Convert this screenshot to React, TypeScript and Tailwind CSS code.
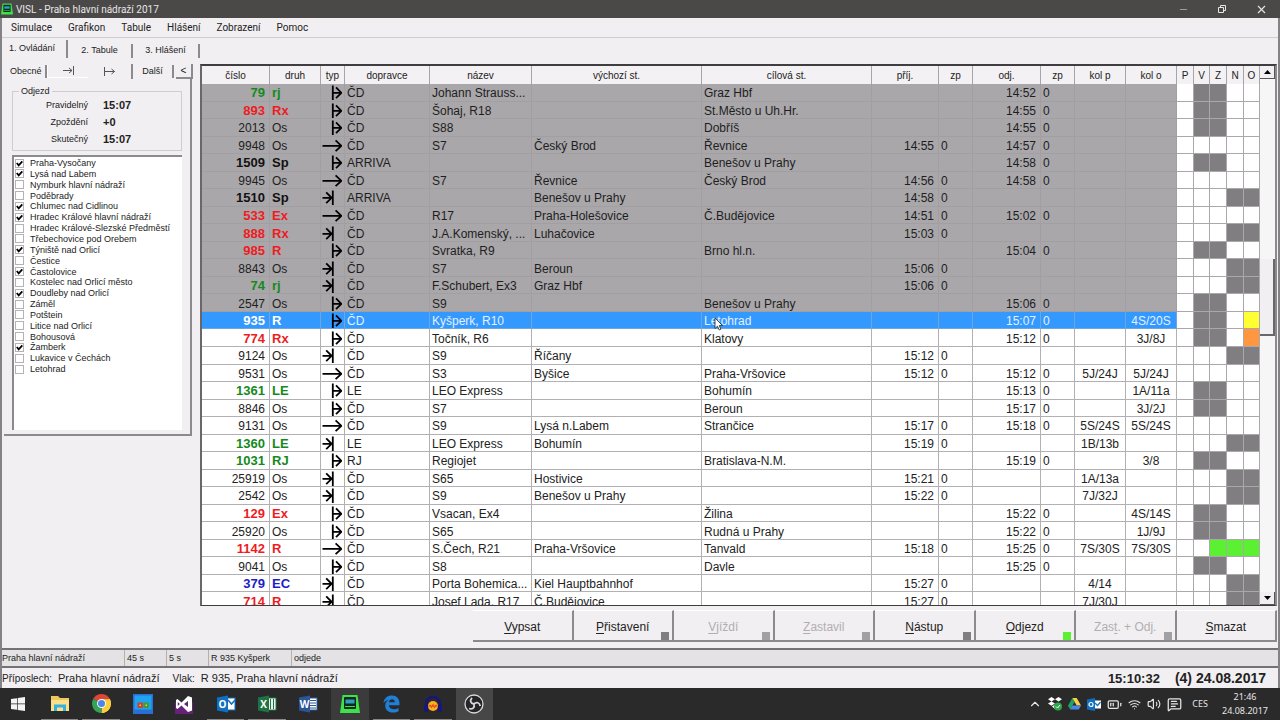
import type { ReactNode } from 'react';
import clsx from 'clsx';
import { BatteryMedium, ChevronUp, MessageSquareText, Minus, Volume2, Wifi, X } from 'lucide-react';

type Kind = 'dep' | 'arr' | 'thru';
type Tone = 'green' | 'red' | 'bold' | 'blue' | 'plain';
type Lamp = '' | 'gray' | 'yellow' | 'orange' | 'lime';

interface Train {
  num: string;
  type: string;
  tone: Tone;
  kind: Kind;
  carrier: string;
  name: string;
  from: string;
  to: string;
  arr: string;
  dep: string;
  trackIn: string;
  trackOut: string;
  lamps?: Lamp[];
}

const train = (
  num: string,
  type: string,
  tone: Tone,
  kind: Kind,
  carrier: string,
  name: string,
  from: string,
  to: string,
  arr: string,
  dep: string,
  trackIn = '',
  trackOut = '',
  lamps?: Lamp[],
): Train => ({ num, type, tone, kind, carrier, name, from, to, arr, dep, trackIn, trackOut, lamps });

const SELECTED = '935';
const PASSED = 13;

const trains: Train[] = [
  train('79', 'rj', 'green', 'dep', 'ČD', 'Johann Strauss...', '', 'Graz Hbf', '', '14:52'),
  train('893', 'Rx', 'red', 'dep', 'ČD', 'Šohaj, R18', '', 'St.Město u Uh.Hr.', '', '14:55'),
  train('2013', 'Os', 'plain', 'dep', 'ČD', 'S88', '', 'Dobříš', '', '14:55'),
  train('9948', 'Os', 'plain', 'thru', 'ČD', 'S7', 'Český Brod', 'Řevnice', '14:55', '14:57'),
  train('1509', 'Sp', 'bold', 'dep', 'ARRIVA', '', '', 'Benešov u Prahy', '', '14:58'),
  train('9945', 'Os', 'plain', 'thru', 'ČD', 'S7', 'Řevnice', 'Český Brod', '14:56', '14:58'),
  train('1510', 'Sp', 'bold', 'arr', 'ARRIVA', '', 'Benešov u Prahy', '', '14:58', ''),
  train('533', 'Ex', 'red', 'thru', 'ČD', 'R17', 'Praha-Holešovice', 'Č.Budějovice', '14:51', '15:02'),
  train('888', 'Rx', 'red', 'arr', 'ČD', 'J.A.Komenský, ...', 'Luhačovice', '', '15:03', ''),
  train('985', 'R', 'red', 'dep', 'ČD', 'Svratka, R9', '', 'Brno hl.n.', '', '15:04'),
  train('8843', 'Os', 'plain', 'arr', 'ČD', 'S7', 'Beroun', '', '15:06', ''),
  train('74', 'rj', 'green', 'arr', 'ČD', 'F.Schubert, Ex3', 'Graz Hbf', '', '15:06', ''),
  train('2547', 'Os', 'plain', 'dep', 'ČD', 'S9', '', 'Benešov u Prahy', '', '15:06'),
  train('935', 'R', 'bold', 'dep', 'ČD', 'Kyšperk, R10', '', 'Letohrad', '', '15:07', '', '4S/20S', ['', 'gray', 'gray', '', 'yellow']),
  train('774', 'Rx', 'red', 'dep', 'ČD', 'Točník, R6', '', 'Klatovy', '', '15:12', '', '3J/8J', ['', 'gray', 'gray', '', 'orange']),
  train('9124', 'Os', 'plain', 'arr', 'ČD', 'S9', 'Říčany', '', '15:12', ''),
  train('9531', 'Os', 'plain', 'thru', 'ČD', 'S3', 'Byšice', 'Praha-Vršovice', '15:12', '15:12', '5J/24J', '5J/24J'),
  train('1361', 'LE', 'green', 'dep', 'LE', 'LEO Express', '', 'Bohumín', '', '15:13', '', '1A/11a'),
  train('8846', 'Os', 'plain', 'dep', 'ČD', 'S7', '', 'Beroun', '', '15:17', '', '3J/2J'),
  train('9131', 'Os', 'plain', 'thru', 'ČD', 'S9', 'Lysá n.Labem', 'Strančice', '15:17', '15:18', '5S/24S', '5S/24S'),
  train('1360', 'LE', 'green', 'arr', 'LE', 'LEO Express', 'Bohumín', '', '15:19', '', '1B/13b'),
  train('1031', 'RJ', 'green', 'dep', 'RJ', 'Regiojet', '', 'Bratislava-N.M.', '', '15:19', '', '3/8'),
  train('25919', 'Os', 'plain', 'arr', 'ČD', 'S65', 'Hostivice', '', '15:21', '', '1A/13a'),
  train('2542', 'Os', 'plain', 'arr', 'ČD', 'S9', 'Benešov u Prahy', '', '15:22', '', '7J/32J'),
  train('129', 'Ex', 'red', 'dep', 'ČD', 'Vsacan, Ex4', '', 'Žilina', '', '15:22', '', '4S/14S'),
  train('25920', 'Os', 'plain', 'dep', 'ČD', 'S65', '', 'Rudná u Prahy', '', '15:22', '', '1J/9J'),
  train('1142', 'R', 'red', 'thru', 'ČD', 'S.Čech, R21', 'Praha-Vršovice', 'Tanvald', '15:18', '15:25', '7S/30S', '7S/30S', ['', '', 'lime', 'lime', 'lime']),
  train('9041', 'Os', 'plain', 'dep', 'ČD', 'S8', '', 'Davle', '', '15:25'),
  train('379', 'EC', 'blue', 'arr', 'ČD', 'Porta Bohemica...', 'Kiel Hauptbahnhof', '', '15:27', '', '4/14'),
  train('714', 'R', 'red', 'arr', 'ČD', 'Josef Lada, R17', 'Č.Budějovice', '', '15:27', '', '7J/30J'),
];

const defaultLamps: Record<Kind, Lamp[]> = {
  dep: ['', 'gray', 'gray', '', ''],
  arr: ['', '', '', 'gray', 'gray'],
  thru: ['', '', '', '', ''],
};

const lampColor: Record<Lamp, string> = {
  '': 'bg-white',
  gray: 'bg-[#807e80]',
  yellow: 'bg-[#ffff33]',
  orange: 'bg-[#ff9640]',
  lime: 'bg-[#5cf032]',
};

const toneColor: Record<Tone, string> = {
  green: 'font-bold text-[13px] text-[#158a1c]',
  red: 'font-bold text-[13px] text-[#ee1c22]',
  bold: 'font-bold text-[13px] text-[#111111]',
  blue: 'font-bold text-[13px] text-[#1c1cc8]',
  plain: '',
};

const columns = [
  { label: 'číslo', width: 'w-[68px]' },
  { label: 'druh', width: 'w-[51px]' },
  { label: 'typ', width: 'w-[24px]' },
  { label: 'dopravce', width: 'w-[85px]' },
  { label: 'název', width: 'w-[102px]' },
  { label: 'výchozí st.', width: 'w-[170px]' },
  { label: 'cílová st.', width: 'w-[170px]' },
  { label: 'příj.', width: 'w-[67px]' },
  { label: 'zp', width: 'w-[34px]' },
  { label: 'odj.', width: 'w-[68px]' },
  { label: 'zp', width: 'w-[34px]' },
  { label: 'kol p', width: 'w-[51px]' },
  { label: 'kol o', width: 'w-[51px]' },
  { label: 'P', width: 'w-[17px]' },
  { label: 'V', width: 'w-[16px]' },
  { label: 'Z', width: 'w-[17px]' },
  { label: 'N', width: 'w-[17px]' },
  { label: 'O', width: 'w-[16px]' },
];

const stations: [string, boolean][] = [
  ['Praha-Vysočany', true],
  ['Lysá nad Labem', true],
  ['Nymburk hlavní nádraží', false],
  ['Poděbrady', false],
  ['Chlumec nad Cidlinou', true],
  ['Hradec Králové hlavní nádraží', true],
  ['Hradec Králové-Slezské Předměstí', false],
  ['Třebechovice pod Orebem', false],
  ['Týniště nad Orlicí', true],
  ['Čestice', false],
  ['Častolovice', true],
  ['Kostelec nad Orlicí město', false],
  ['Doudleby nad Orlicí', true],
  ['Záměl', false],
  ['Potštein', false],
  ['Litice nad Orlicí', false],
  ['Bohousová', false],
  ['Žamberk', true],
  ['Lukavice v Čechách', false],
  ['Letohrad', false],
];

const KindIcon = ({ kind }: { kind: Kind }) => (
  <svg className="block h-4 w-5" viewBox="0 0 20 16" fill="none" stroke="#000" strokeWidth={1.8}>
    {kind === 'dep' && <path d="M10.8 1.500V16M10.8 8.800H19M14 3.400L19.400 8.800L14 14.200" />}
    {kind === 'thru' && <path d="M.5 8.800H19M13.600 3.400L19.400 8.800L13.600 14.200" />}
    {kind === 'arr' && <path d="M10.800 1.500V16M.5 8.800H9.600M4.200 3.400L9.600 8.800L4.200 14.200" />}
  </svg>
);

const AppIcon = ({ className }: { className: string }) => (
  <svg className={className} viewBox="0 0 20 18">
    <path d="M2.5 0H17.5L20 18H0Z" fill="#3fe04a" />
    <rect x="4" y="2" width="12" height="12" rx="1" fill="#0c2b1c" />
    <rect x="5.5" y="4.5" width="9" height="4" fill="#2e9fc0" />
    <path d="M5 11.5h10" stroke="#3fe04a" strokeWidth="1" />
  </svg>
);

const TitleBar = () => (
  <header className="flex h-[18px] shrink-0 items-center bg-[#4b4848] pr-3 text-[#e8e6e6]">
    <AppIcon className="ml-px h-[12px] w-[12px]" />
    <h1 className="ml-[3px] flex-1 font-[Roboto,sans-serif] text-[10px]">VISL - Praha hlavní nádraží 2017</h1>
    <button aria-label="Minimalizovat" className="mr-7 text-[#a5a3a3]">
      <Minus size={11} />
    </button>
    <button aria-label="Obnovit" className="mr-7">
      <svg className="h-[10px] w-[10px]" viewBox="0 0 10 10" fill="none" stroke="currentColor">
        <path d="M1.5 3.5h5v5h-5zM3.5 3.5v-2h5v5h-2" />
      </svg>
    </button>
    <button aria-label="Zavřít">
      <X size={13} strokeWidth={2} />
    </button>
  </header>
);

const MenuBar = () => (
  <nav className="flex h-5 shrink-0 items-center gap-4 border-b border-[#cfcdd0] pl-[9px] font-[Roboto,sans-serif] text-[10px]">
    {['Simulace', 'Grafikon', 'Tabule', 'Hlášení', 'Zobrazení', 'Pomoc'].map((item) => (
      <button key={item}>{item}</button>
    ))}
  </nav>
);

const MainTabs = () => (
  <div role="tablist" className="flex h-[22px] shrink-0 items-end pb-[2px] text-[9px]">
    <button role="tab" aria-selected className="h-[18px] w-[66px] border-r-2 border-[#8d8a8e] pr-1">
      1. Ovládání
    </button>
    <button role="tab" className="h-[14px] w-[65px] border-r-2 border-[#8d8a8e]">
      2. Tabule
    </button>
    <button role="tab" className="h-[14px] w-[67px] border-r-2 border-[#8d8a8e]">
      3. Hlášení
    </button>
  </div>
);

const SubTabs = () => (
  <div role="tablist" className="flex h-4 items-center text-[9px]">
    <button role="tab" className="h-[13px] w-[45px] border-r-2 border-[#8d8a8e] pl-2 text-left">
      Obecné
    </button>
    <button role="tab" aria-label="Příjezd" className="flex h-[13px] w-[41px] items-center justify-center border-b border-l border-white">
      <svg className="h-[9px] w-[11px]" viewBox="0 0 11 9" fill="none" stroke="#555">
        <path d="M10.5 0V9M0 4.5H9M6 2L9 4.5L6 7" />
      </svg>
    </button>
    <button role="tab" aria-selected aria-label="Odjezd" className="flex h-[15px] w-[45px] items-center justify-center border-r-2 border-[#8d8a8e]">
      <svg className="h-[9px] w-[11px]" viewBox="0 0 11 9" fill="none" stroke="#555">
        <path d="M.5 0V9M1 4.5H10.5M7.5 2L10.5 4.5L7.5 7" />
      </svg>
    </button>
    <button role="tab" className="h-[13px] w-[41px] border-r-2 border-[#8d8a8e]">
      Další
    </button>
    <button aria-label="Zpět" className="ml-[2px] flex h-[15px] w-[17px] items-center justify-center border-r-2 border-b-2 border-[#8d8a8e] pt-px text-[10px]">
      &lt;
    </button>
  </div>
);

const DepartureInfo = () => {
  const rows = [
    ['Pravidelný', '15:07'],
    ['Zpoždění', '+0'],
    ['Skutečný', '15:07'],
  ];

  return (
    <fieldset className="mx-2 mt-[6px] h-[66px] border border-[#cfcdd0] text-[9px]">
      <legend className="ml-[6px] px-[2px] leading-3">Odjezd</legend>
      <dl className="grid grid-cols-[75px_1fr] gap-x-[15px] leading-[17px]">
        {rows.map(([label, value]) => (
          <div key={label} className="contents">
            <dt className="text-right">{label}</dt>
            <dd className="text-[11px] font-bold">{value}</dd>
          </div>
        ))}
      </dl>
    </fieldset>
  );
};

const StationList = () => (
  <div className="mx-2 mt-1 flex-1 border-t-2 border-l-2 border-[#8d8a8e] bg-white pt-px">
    <ul className="grid h-[217px] auto-rows-fr text-[9px] leading-[10px]">
      {stations.map(([name, checked]) => (
        <li key={name}>
          <label className="flex items-center gap-[6px] pl-px whitespace-nowrap">
            <span className="relative flex">
              <input
                type="checkbox"
                defaultChecked={checked}
                className="peer h-[9px] w-[9px] appearance-none border border-[#b5b2b6] bg-white"
              />
              <svg
                className="pointer-events-none absolute inset-0 hidden h-[9px] w-[9px] peer-checked:block"
                viewBox="0 0 9 9"
                fill="none"
                stroke="#000"
                strokeWidth={1.8}
              >
                <path d="M1.8 4L3.7 6.3L7.3 2.4" />
              </svg>
            </span>
            {name}
          </label>
        </li>
      ))}
    </ul>
  </div>
);

const Cell = ({ className, children }: { className?: string; children?: ReactNode }) => (
  <td className={clsx('overflow-hidden border-r border-b px-[2px] pt-[2px] pb-0 whitespace-nowrap', className)}>
    {children}
  </td>
);

const TrainRow = ({ item, passed }: { item: Train; passed: boolean }) => {
  const selected = item.num === SELECTED;
  const lamps = item.lamps ?? defaultLamps[item.kind];
  const line = selected ? 'border-[#6fa6dc]' : passed ? 'border-[#a29fa3]' : 'border-[#b3b0b4]';
  const tone = selected ? 'font-bold text-[13px] text-white' : toneColor[item.tone];

  return (
    <tr
      className={clsx(
        selected ? 'bg-[#3399ff] text-[#e4f0ff]' : passed ? 'bg-[#a9a7aa] text-[#1e1e1e]' : 'bg-white text-[#222222]',
      )}
    >
      <Cell className={clsx('pr-1 text-right', line, tone)}>{item.num}</Cell>
      <Cell className={clsx(line, tone)}>{item.type}</Cell>
      <td className={clsx('border-r border-b p-0 pl-px', line)}>
        <KindIcon kind={item.kind} />
      </td>
      <Cell className={line}>{item.carrier}</Cell>
      <Cell className={line}>{item.name}</Cell>
      <Cell className={line}>{item.from}</Cell>
      <td className={clsx('relative border-r border-b px-[2px] pt-[2px] pb-0 whitespace-nowrap', line)}>
        {item.to}
        {selected && (
          <svg className="absolute top-[5px] left-3 h-[14px] w-[10px]" viewBox="0 0 10 14">
            <path d="M1 1V11.5L3.5 9.2L5.2 13L6.9 12.2L5.3 8.6H8.6Z" fill="#fff" stroke="#222" strokeWidth=".8" />
          </svg>
        )}
      </td>
      <Cell className={clsx('pr-1 text-right', line)}>{item.arr}</Cell>
      <Cell className={line}>{item.arr && '0'}</Cell>
      <Cell className={clsx('pr-1 text-right', line)}>{item.dep}</Cell>
      <Cell className={line}>{item.dep && '0'}</Cell>
      <Cell className={clsx('text-center', line)}>{item.trackIn}</Cell>
      <Cell className={clsx('text-center', line)}>{item.trackOut}</Cell>
      {lamps.map((lamp, i) => (
        <td key={i} className={clsx('border-r border-b border-[#aaa8ab] p-0', lampColor[lamp])} />
      ))}
    </tr>
  );
};

const TrainTable = () => (
  <div className="flex min-h-0 flex-1 border-2 border-b border-[#3f3d40] border-r-[#8d8a8e] border-l-[#6a676b]">
    <div className="min-w-0 flex-1 overflow-hidden bg-white">
      <table className="h-[544px] w-full table-fixed border-separate border-spacing-0 text-[12px] leading-[14px]">
        <colgroup>
          {columns.map((col, i) => (
            <col key={i} className={col.width} />
          ))}
        </colgroup>
        <thead>
          <tr className="h-[18px] bg-[#f3f1f3] text-[10px]">
            {columns.map((col, i) => (
              <th key={i} className="border-r border-[#a8a5a9] p-0 pt-[2px] font-normal whitespace-nowrap">
                {col.label}
              </th>
            ))}
          </tr>
        </thead>
        <tbody>
          {trains.map((item, i) => (
            <TrainRow key={item.num} item={item} passed={i < PASSED} />
          ))}
        </tbody>
      </table>
    </div>
    <div className="flex w-[15px] shrink-0 flex-col bg-[#f7f6f7]">
      <button aria-label="Nahoru" className="flex h-[13px] items-center justify-center border-r border-b border-[#555] bg-[#f1eff1]">
        <svg className="h-1 w-[7px]" viewBox="0 0 7 4">
          <path d="M0 4L3.5 0L7 4Z" />
        </svg>
      </button>
      <div className="flex flex-1 flex-col">
        <div className="flex-[181]" />
        <div className="flex-[75] border-r-2 border-b-2 border-[#6a676b] bg-[#f1eff1]" />
        <div className="flex-[257]" />
      </div>
      <button aria-label="Dolů" className="flex h-[13px] items-center justify-center border-r border-b border-[#555] bg-[#f1eff1]">
        <svg className="h-1 w-[7px]" viewBox="0 0 7 4">
          <path d="M0 0L3.5 4L7 0Z" />
        </svg>
      </button>
    </div>
  </div>
);

interface ActionProps {
  before?: string;
  hot: string;
  after: string;
  lamp?: string;
  disabled?: boolean;
}

const ActionButton = ({ before, hot, after, lamp, disabled }: ActionProps) => (
  <button
    disabled={disabled}
    className="relative border-t border-r-2 border-b-2 border-t-white border-r-[#8d8a8e] border-b-[#8d8a8e] pt-[2px] text-[12px] disabled:text-[#b1aeb2]"
  >
    {before}
    <span className="underline underline-offset-2">{hot}</span>
    {after}
    {lamp && <span className={clsx('absolute right-[3px] bottom-0 h-2 w-2', lamp)} />}
  </button>
);

const ActionBar = () => (
  <div className="mt-1 mb-[6px] ml-auto grid h-[32px] w-[804px] shrink-0 grid-cols-8">
    <ActionButton hot="V" after="ypsat" />
    <ActionButton hot="P" after="řistavení" lamp="bg-[#807e80]" />
    <ActionButton hot="V" after="jíždí" lamp="bg-[#a3a0a4]" disabled />
    <ActionButton hot="Z" after="astavil" lamp="bg-[#a3a0a4]" disabled />
    <ActionButton hot="N" after="ástup" lamp="bg-[#807e80]" />
    <ActionButton hot="O" after="djezd" lamp="bg-[#5cf032]" />
    <ActionButton before="Zas" hot="t" after=". + Odj." lamp="bg-[#a3a0a4]" disabled />
    <ActionButton hot="S" after="mazat" />
  </div>
);

const StatusBar = () => (
  <footer className="shrink-0">
    <div className="flex h-[20px] items-center border-t-2 border-b-2 border-[#757276] bg-[#e4e2e4] text-[9px] leading-4">
      <span className="w-[123px] border-r border-[#b3b0b4]">Praha hlavní nádraží</span>
      <span className="w-[42px] border-r border-[#b3b0b4] pl-[2px]">45 s</span>
      <span className="w-[42px] border-r border-[#b3b0b4] pl-[2px]">5 s</span>
      <span className="w-[83px] border-r border-[#b3b0b4] pl-[2px]">R 935 Kyšperk</span>
      <span className="pl-[2px]">odjede</span>
    </div>
    <div className="flex h-5 items-center pt-px pr-3 text-[11px]">
      <span className="text-[10px]">Příposlech:</span>
      <span className="ml-[6px]">Praha hlavní nádraží</span>
      <span className="ml-[13px] text-[10px]">Vlak:</span>
      <span className="ml-[6px]">R 935, Praha hlavní nádraží</span>
      <time className="ml-auto text-[13px] font-bold">15:10:32</time>
      <time className="ml-[15px] text-[14px] font-bold">(4) 24.08.2017</time>
    </div>
  </footer>
);

const OfficeIcon = ({ letter, color, page }: { letter: string; color: string; page: ReactNode }) => (
  <svg className="h-[18px] w-[20px]" viewBox="0 0 20 18">
    <rect x="9" y="3" width="10" height="12" fill="#fff" stroke={color} />
    {page}
    <path d="M1 2.5L12 .5V17.5L1 15.5Z" fill={color} />
    <text x="6.5" y="12.5" textAnchor="middle" fontSize="10" fontWeight="700" fill="#fff" fontFamily="Open Sans, sans-serif">
      {letter}
    </text>
  </svg>
);

const OutlookIcon = () => (
  <OfficeIcon letter="O" color="#0f6fc0" page={<path d="M12 5l3.5 4L19 5" stroke="#0f6fc0" fill="none" strokeWidth="1.5" />} />
);

const apps: { name: string; running?: boolean; tile?: string; icon: ReactNode }[] = [
  {
    name: 'Průzkumník',
    running: true,
    icon: (
      <svg className="h-[17px] w-5" viewBox="0 0 20 17">
        <path d="M1 1h7l2 2h9v13H1z" fill="#f0c75e" />
        <path d="M1 5h18v11H1z" fill="#fbe08c" />
        <path d="M4 16V9.5h12V16h-3v-3.5H7V16z" fill="#35b0e0" />
      </svg>
    ),
  },
  {
    name: 'Chrome',
    running: true,
    icon: (
      <svg className="h-[19px] w-[19px]" viewBox="0 0 20 20">
        <path d="M10 10L1.34 5A10 10 0 0 1 18.66 5Z" fill="#e0453a" />
        <path d="M10 10L18.66 5A10 10 0 0 1 10 20Z" fill="#fbcf3c" />
        <path d="M10 10V20A10 10 0 0 1 1.34 5Z" fill="#35a354" />
        <path d="M10 5.5H18.9A10 10 0 0 1 10 20L14 12Z" fill="#fbcf3c" />
        <circle cx="10" cy="10" r="4.7" fill="#fff" />
        <circle cx="10" cy="10" r="3.7" fill="#4a86e8" />
      </svg>
    ),
  },
  {
    name: 'Panel',
    icon: (
      <svg className="h-5 w-5" viewBox="0 0 20 20">
        <rect width="20" height="20" fill="#2a6fd6" />
        <rect x="1.5" y="1.5" width="17" height="14" fill="#1fa3ee" />
        <rect x="4.5" y="8.5" width="5.500" height="5.500" fill="#c8452f" />
        <rect x="10.5" y="8.5" width="5.500" height="5.500" fill="#3f9c3b" />
        <rect x="6.5" y="10.500" width="1.500" height="1.500" fill="#f4c542" />
        <rect x="12.500" y="10.500" width="1.500" height="1.500" fill="#f4c542" />
      </svg>
    ),
  },
  {
    name: 'Visual Studio',
    icon: (
      <svg className="h-5 w-[18px]" viewBox="0 0 18 20">
        <path d="M0 8H18V20H0z" fill="#68217a" />
        <path d="M13 2l4 1.5v13L13 18 6.5 11.5 2.5 15 1 14V6l1.5-1L6.5 8.5zM13 7l-4 3 4 3zM2.8 8v4l2-2z" fill="#fff" fillRule="evenodd" />
      </svg>
    ),
  },
  { name: 'Outlook', running: true, icon: <OutlookIcon /> },
  {
    name: 'Excel',
    running: true,
    icon: <OfficeIcon letter="X" color="#1f7244" page={<path d="M13.5 4v10M16.5 4v10" stroke="#1f7244" strokeWidth="1.2" />} />,
  },
  {
    name: 'Word',
    icon: <OfficeIcon letter="W" color="#2a5699" page={<path d="M12 5.5h6M12 8h6M12 10.5h6M12 13h6" stroke="#2a5699" />} />,
  },
  { name: 'VISL', tile: 'bg-[#3b3b3b]', icon: <AppIcon className="h-[18px] w-5" /> },
  {
    name: 'Edge',
    running: true,
    icon: (
      <svg className="h-[18px] w-[17px]" viewBox="0 0 17 18">
        <path
          d="M.5 8C1 3 4.5 .5 8.8 .5C13.8 .5 16.5 4 16.5 8.5V10.3H5.8C6 13 8.2 14.3 10.8 14.3C12.8 14.3 14.3 13.7 15.5 13V16.3C14 17.2 12.2 17.6 10 17.6C5.5 17.6 2.2 15 2.2 10.6C2.2 8 3.5 6 5.5 4.9C3.5 5.2 1.7 6.3 .5 8ZM5.9 7.3H11.8C11.8 5.4 10.8 4.2 9 4.2C7.3 4.2 6.2 5.5 5.9 7.3Z"
          fill="#1f80d8"
        />
      </svg>
    ),
  },
  {
    name: 'Audacity',
    running: true,
    icon: (
      <svg className="h-[18px] w-[18px]" viewBox="0 0 18 18">
        <path d="M2 13V9a7 7 0 0 1 14 0v4" fill="none" stroke="#16167e" strokeWidth="2.5" />
        <circle cx="9" cy="11" r="5" fill="#f8b31c" />
        <path d="M4.500 11.500l1.500-1 1.500 1.500 1.500-2 1.500 2 1.500-1.500 1.500 1" stroke="#e8502a" strokeWidth="1.500" fill="none" />
        <rect y="10" width="4" height="7" rx="1.5" fill="#16167e" />
        <rect x="14" y="10" width="4" height="7" rx="1.5" fill="#16167e" />
      </svg>
    ),
  },
  {
    name: 'OBS',
    tile: 'bg-[#474747]',
    icon: (
      <svg className="h-5 w-5" viewBox="0 0 20 20" fill="none" stroke="#d8d8d8">
        <circle cx="10" cy="10" r="9" fill="#262428" strokeWidth="1.3" />
        <path d="M10 10C6.5 9.5 5.5 6.5 8 3.8M10 10C12.5 7.5 15.6 8.5 16.2 12M10 10C11 13.5 8.5 15.8 5 14.5" strokeWidth="1.8" />
      </svg>
    ),
  },
];

const Taskbar = () => (
  <div className="flex h-8 shrink-0 items-center bg-[#2b2a2b] pr-2 font-['Noto_Sans',sans-serif] text-[9px] text-[#e6e6e6]">
    <button aria-label="Start" className="flex w-[39px] justify-center pr-1">
      <svg className="h-[14px] w-[14px]" viewBox="0 0 14 14" fill="#f4f4f4">
        <path d="M0 2L6 1.2V6.6H0zM6.7 1.1L14 0V6.6H6.7zM0 7.3H6V12.7L0 12zM6.7 7.3H14V14L6.7 12.9z" />
      </svg>
    </button>
    <div className="grid h-full w-[456px] grid-cols-11">
      {apps.map((app) => (
        <button
          key={app.name}
          aria-label={app.name}
          className={clsx('mx-[2px] flex items-center justify-center border-b', app.running ? 'border-[#8f8686]' : 'border-transparent', app.tile)}
        >
          {app.icon}
        </button>
      ))}
    </div>
    <div className="ml-auto flex items-center gap-[6px]">
      <ChevronUp size={14} strokeWidth={2} />
      <svg className="h-[14px] w-[14px]" viewBox="0 0 14 14">
        <path d="M3.5 0L7 2.2L3.5 4.4L0 2.2zM10.5 0L14 2.2L10.5 4.4L7 2.2zM3.5 4.4L7 6.6L3.5 8.8L0 6.6zM7 7.5l3 2-3 2.5-3-2.5z" fill="#fff" />
        <circle cx="10" cy="9.5" r="4" fill="#2fa84a" />
        <path d="M8 9.5l1.5 1.5 2.5-3" stroke="#fff" fill="none" />
      </svg>
      <svg className="h-[12px] w-[13px]" viewBox="0 0 13 12">
        <path d="M4.3 0H8.7L13 7.6H8.7z" fill="#f9cf45" />
        <path d="M4.3 0L6.5 3.9L2.2 11.6L0 7.7z" fill="#1da462" />
        <path d="M4.4 7.6H13L10.8 11.6H2.2z" fill="#4a86e8" />
      </svg>
      <svg className="h-[13px] w-[14px]" viewBox="0 0 14 13">
        <path d="M7 2.5h7v8H7z" fill="#fff" />
        <path d="M8 5l2.5 2.5L13.5 4" stroke="#0f6fc0" fill="none" strokeWidth="1.3" />
        <path d="M0 1.5L8 0v13l-8-1.5z" fill="#0f6fc0" />
        <circle cx="4" cy="6.5" r="2" fill="none" stroke="#fff" strokeWidth="1.2" />
      </svg>
      <BatteryMedium size={15} />
      <Wifi size={13} />
      <Volume2 size={14} />
      <MessageSquareText size={15} />
      <span className="ml-1">CES</span>
      <div className="ml-1 w-[54px] text-center leading-[14px]">
        <time className="block">21:46</time>
        <time className="block">24.08.2017</time>
      </div>
    </div>
  </div>
);

export default function App() {
  return (
    <div className="flex h-screen flex-col bg-[#f1eff1] font-['Liberation_Sans',Arial,sans-serif] text-[#222222]">
      <TitleBar />
      <div className="flex min-h-0 flex-1 flex-col border-r-2 border-l-2 border-[#858286]">
        <MenuBar />
        <MainTabs />
        <main className="flex min-h-0 flex-1">
          <aside className="w-[198px] shrink-0 pt-[3px]">
            <SubTabs />
            <section className="mr-2 ml-[2px] flex h-[357px] flex-col border-r-2 border-b-2 border-[#8d8a8e] pb-1">
              <DepartureInfo />
              <StationList />
            </section>
          </aside>
          <section className="mr-[1px] flex min-w-0 flex-1 flex-col pt-1">
            <TrainTable />
            <ActionBar />
          </section>
        </main>
        <StatusBar />
      </div>
      <Taskbar />
    </div>
  );
}
